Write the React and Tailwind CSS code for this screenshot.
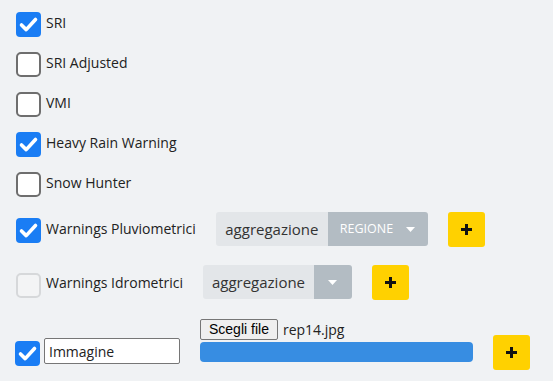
import React from 'react';

const Check = ({ checked, disabled }) => {
  if (checked) {
    return (
      <div className="w-[25px] h-[25px] shrink-0 rounded-[4px] bg-[#1a7df4] flex items-center justify-center">
        <svg width="25" height="25" viewBox="0 0 25 25">
          <path d="M5.5 13 L10.2 17.6 L19.5 7.5" fill="none" stroke="#fff" strokeWidth="3.6" strokeLinecap="round" strokeLinejoin="round" />
        </svg>
      </div>
    );
  }
  return (
    <div
      className={
        disabled
          ? 'w-[25px] h-[25px] shrink-0 rounded-[5px] border-2 border-[#d6d8da] bg-[#f3f4f5]'
          : 'w-[25px] h-[25px] shrink-0 rounded-[5px] border-2 border-[#6e6e6e] bg-white'
      }
    />
  );
};

const Row = ({ label, checked, disabled }) => (
  <div className="flex items-center gap-[5px] h-[25px]">
    <Check checked={checked} disabled={disabled} />
    <span className="text-[14px] text-[#222] pb-[5px]">{label}</span>
  </div>
);

const Plus = () => (
  <div className="w-[37px] h-[35px] rounded-[3px] bg-[#ffd100] flex items-center justify-center shrink-0">
    <svg width="13" height="13" viewBox="0 0 13 13">
      <path d="M6.5 1v11M1 6.5h11" stroke="#111" strokeWidth="3" />
    </svg>
  </div>
);

const Caret = () => (
  <svg width="9" height="5" viewBox="0 0 9 5">
    <path d="M0 0h9L4.5 5z" fill="#fff" />
  </svg>
);

export default function App() {
  return (
    <div className="w-[553px] h-[381px] bg-[#f0f2f4] pl-4 pt-3 font-['Open_Sans',sans-serif] overflow-hidden">
      <div className="flex flex-col gap-[15px]">
        <Row label="SRI" checked />
        <Row label="SRI Adjusted" />
        <Row label="VMI" />
        <Row label="Heavy Rain Warning" checked />
        <Row label="Snow Hunter" />
      </div>

      <div className="flex items-center mt-[15px] h-[34px]">
        <div className="flex items-center gap-[5px] pt-[3px]">
          <Check checked />
          <span className="text-[14px] text-[#222] pb-[4px]">Warnings Pluviometrici</span>
        </div>
        <div className="ml-[20px] flex h-[34px] rounded-[3px] overflow-hidden">
          <div className="w-[112px] bg-[#e3e6e9] flex items-center justify-center text-[15px] text-[#333]">aggregazione</div>
          <div className="w-[100px] bg-[#b3bcc3] flex items-center justify-between pl-[12px] pr-[13px] text-[12.5px] text-white">
            <span>REGIONE</span>
            <Caret />
          </div>
        </div>
        <div className="ml-[20px]">
          <Plus />
        </div>
      </div>

      <div className="flex items-center mt-[19px] h-[34px]">
        <div className="flex items-center gap-[5px] pt-[7px]">
          <Check disabled />
          <span className="text-[14px] text-[#222] -mt-[6px]">Warnings Idrometrici</span>
        </div>
        <div className="ml-[20px] flex h-[34px] rounded-[3px] overflow-hidden">
          <div className="w-[111px] bg-[#e3e6e9] flex items-center justify-center text-[15px] text-[#333]">aggregazione</div>
          <div className="w-[38px] bg-[#b3bcc3] flex items-center justify-center">
            <Caret />
          </div>
        </div>
        <div className="ml-[20px]">
          <Plus />
        </div>
      </div>

      <div className="flex mt-[20px]">
        <div className="flex items-start gap-[4px] -ml-px">
          <div className="mt-[22px]">
            <Check checked />
          </div>
          <input
            readOnly
            value="Immagine"
            className="mt-[19px] w-[136px] h-[26px] bg-white border border-[#767676] rounded-[2px] px-[4px] text-[14px] text-[#222] font-['Open_Sans',sans-serif]"
          />
        </div>
        <div className="ml-[20px] flex flex-col w-[273px]">
          <div className="flex items-center h-[21px]">
            <div className="h-[21px] px-[8px] bg-[#efefef] border border-[#767676] rounded-[2px] flex items-center text-[14px] text-black font-['Liberation_Sans',sans-serif]">
              Scegli file
            </div>
            <span className="ml-[5px] text-[14px] text-[#222]">rep14.jpg</span>
          </div>
          <div className="mt-[2px] h-[20px] rounded-[4px] bg-[#378de2]" />
        </div>
        <div className="ml-[20px] mt-[16px]">
          <Plus />
        </div>
      </div>
    </div>
  );
}
